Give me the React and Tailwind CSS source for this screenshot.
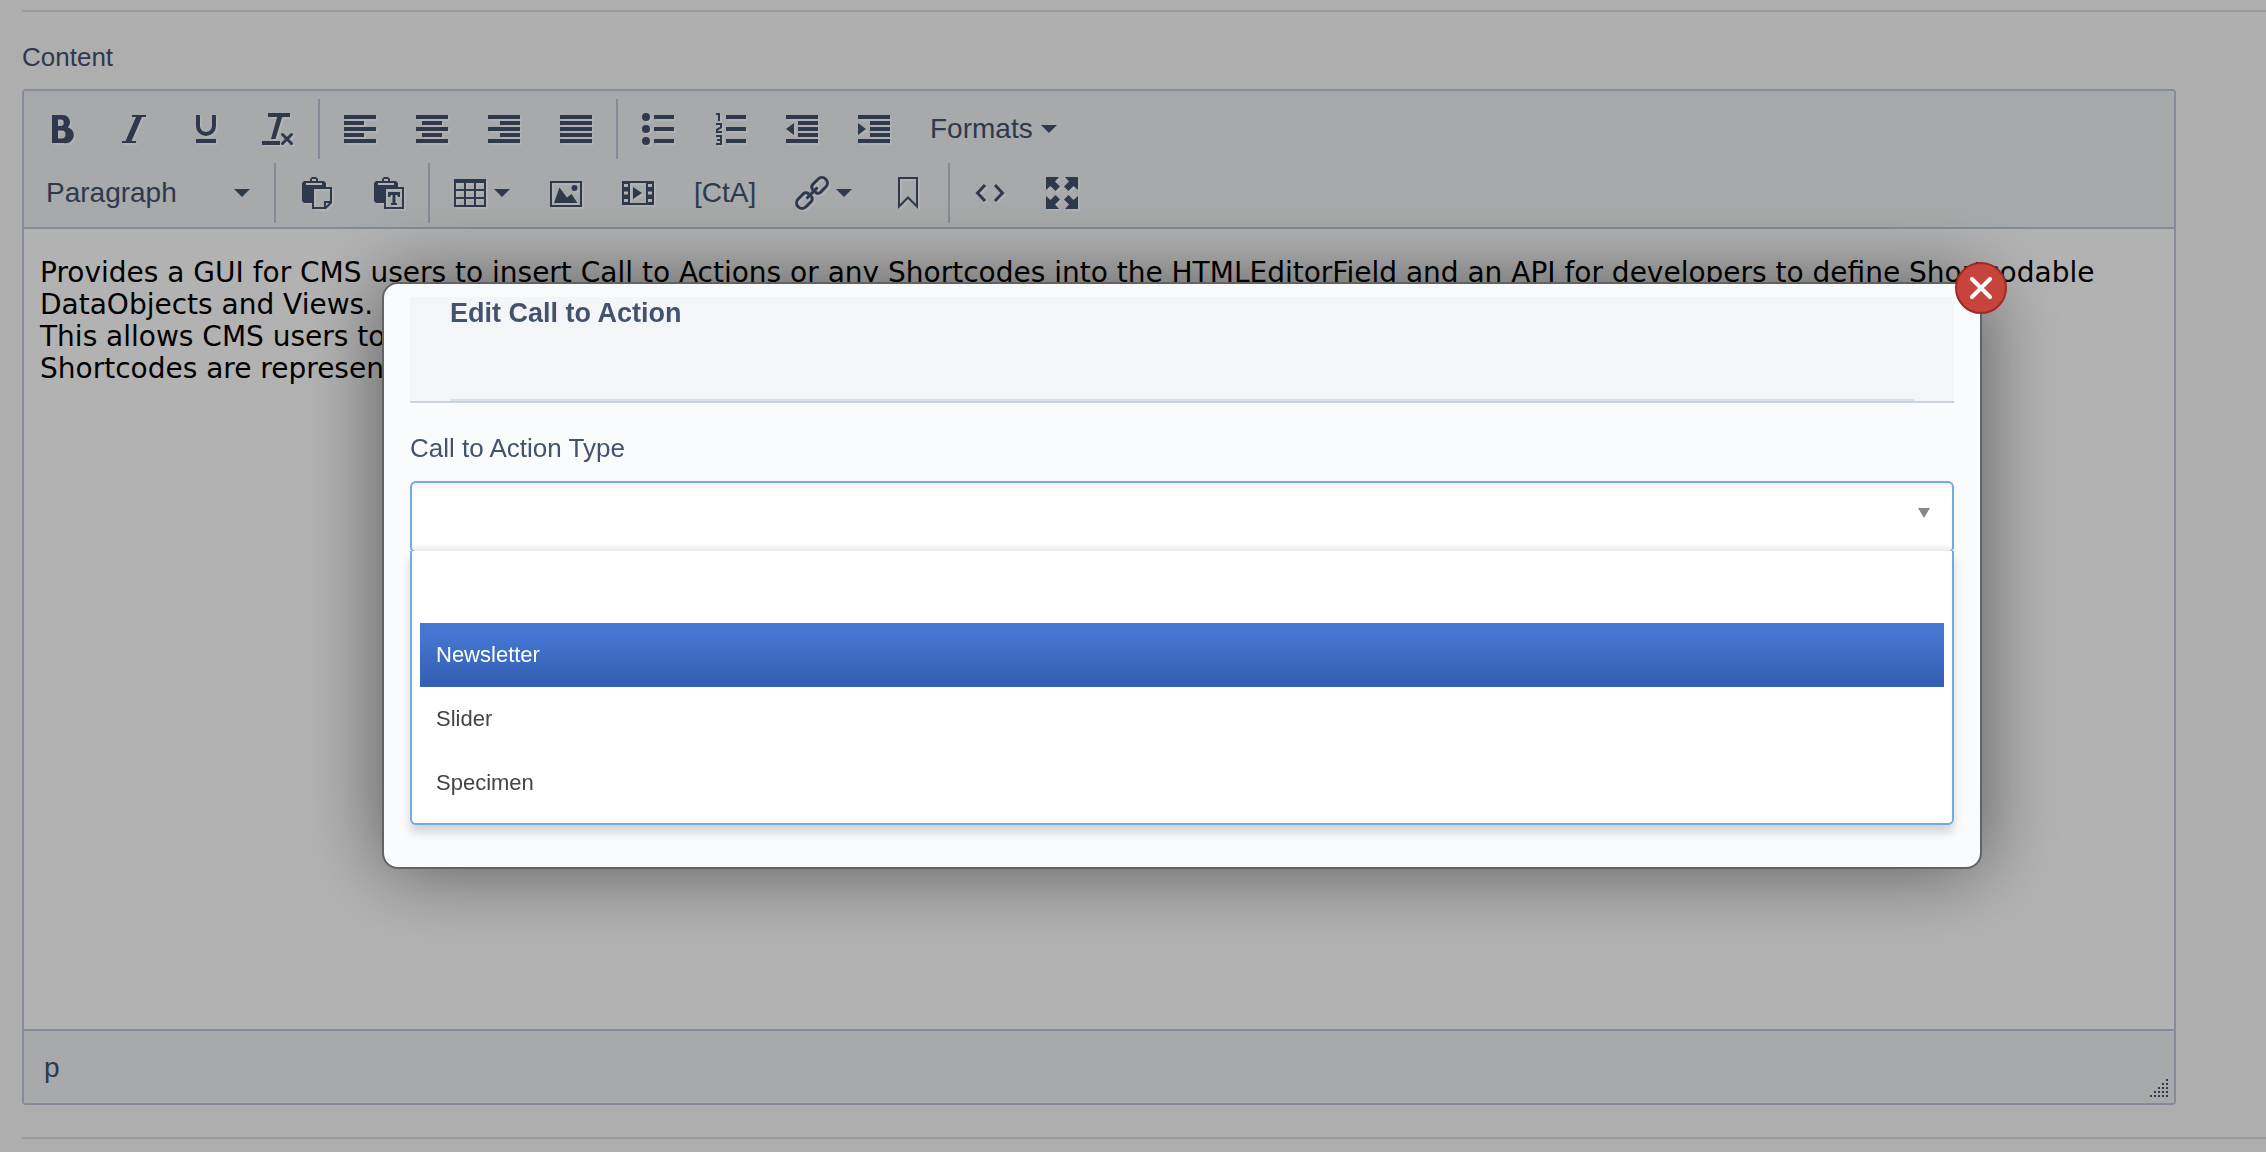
import React from "react";

function Icon({ children }) {
  return (
    <svg
      viewBox="0 0 32 32"
      aria-hidden="true"
      className="size-8 shrink-0 overflow-visible fill-current drop-shadow-[2px_2px_0_#ffffff]"
    >
      {children}
    </svg>
  );
}

function Caret() {
  return (
    <svg viewBox="0 0 16 8" aria-hidden="true" className="h-2 w-4 shrink-0 fill-current">
      <path d="M0 0h16L8 8z" />
    </svg>
  );
}

function ToolButton({ label, menu, children }) {
  return (
    <button
      type="button"
      aria-label={label}
      aria-haspopup={menu ? "menu" : undefined}
      className="flex h-[60px] items-center gap-2 px-5"
    >
      {children}
      {menu && <Caret />}
    </button>
  );
}

function Group({ first, children }) {
  return (
    <div className={first ? "flex h-[60px] pr-1" : "flex h-[60px] border-l-2 border-[#bfc8d9] px-1"}>
      {children}
    </div>
  );
}

const bars = (rows) => rows.map(([x, y, w]) => <rect key={y} x={x} y={y} width={w} height="4" />);

const icons = {
  bold: (
    <path
      fillRule="evenodd"
      d="M6 2h10.500a7.200 7.200 0 0 1 5.300 12.300A8 8 0 0 1 17.500 30H6zM12 6.500v6.500h2.500a3.250 3.250 0 0 0 0-6.500zM12 17.500v8h3.500a4 4 0 0 0 0-8z"
    />
  ),
  italic: <path d="M14 2h14v2h-4L13.500 28H18v2H4v-2h3.500L18 4h-4z" />,
  underline: (
    <>
      <path d="M8 2v11a8 8 0 0 0 16 0V2" fill="none" stroke="currentColor" strokeWidth="4" />
      <rect x="6" y="26" width="20" height="4" />
    </>
  ),
  clear: (
    <>
      <path d="M6 0h22v4H6zM15.500 3h5L13.500 26H9zM0 28h18v4H0z" />
      <path d="M20.500 21.500l9 9M29.500 21.500l-9 9" stroke="currentColor" strokeWidth="3" strokeLinecap="round" />
    </>
  ),
  left: bars([[0, 2, 32], [0, 8, 20], [0, 14, 32], [0, 20, 20], [0, 26, 32]]),
  center: bars([[0, 2, 32], [6, 8, 20], [0, 14, 32], [6, 20, 20], [0, 26, 32]]),
  right: bars([[0, 2, 32], [12, 8, 20], [0, 14, 32], [12, 20, 20], [0, 26, 32]]),
  justify: bars([[0, 2, 32], [0, 8, 32], [0, 14, 32], [0, 20, 32], [0, 26, 32]]),
  bullets: (
    <>
      {bars([[12, 2, 20], [12, 14, 20], [12, 26, 20]])}
      <circle cx="4" cy="4" r="4" />
      <circle cx="4" cy="16" r="4" />
      <circle cx="4" cy="28" r="4" />
    </>
  ),
  numbers: (
    <>
      {bars([[12, 2, 20], [12, 14, 20], [12, 26, 20]])}
      <path
        d="M2 1h3v7M2 11h5v3.500L3 16.500V19h5M2 23h5v8H2M3 27h4"
        fill="none"
        stroke="currentColor"
        strokeWidth="2"
      />
    </>
  ),
  outdent: (
    <>
      {bars([[0, 2, 32], [12, 8, 20], [12, 14, 20], [12, 20, 20], [0, 26, 32]])}
      <path d="M8 10v12l-8-6z" />
    </>
  ),
  indent: (
    <>
      {bars([[0, 2, 32], [12, 8, 20], [12, 14, 20], [12, 20, 20], [0, 26, 32]])}
      <path d="M0 10v12l8-6z" />
    </>
  ),
  paste: (
    <>
      <path fillRule="evenodd" d="M4 4h6V2l2-2h4l2 2v2h6l2 2v4H12v16H4l-2-2V6zM12 2v2h4V2zM6 6v2h16V6z" />
      <path fillRule="evenodd" d="M12 10h20v16l-6 6H12zM14 12v18h10v-6h6V12zM26 26v3l3-3z" />
    </>
  ),
  pasteText: (
    <>
      <path fillRule="evenodd" d="M4 4h6V2l2-2h4l2 2v2h6l2 2v4H12v16H4l-2-2V6zM12 2v2h4V2zM6 6v2h16V6z" />
      <path fillRule="evenodd" d="M12 10h20v22H12zM14 12v18h16V12z" />
      <path d="M16 15h12v5h-2l-1-2h-1.500v8H25v2h-6v-2h1.500v-8H19l-1 2h-2z" />
    </>
  ),
  table: (
    <path
      fillRule="evenodd"
      d="M0 2h32v28H0zM2 6v6h8V6zM12 6v6h8V6zM22 6v6h8V6zM2 14v6h8v-6zM12 14v6h8v-6zM22 14v6h8v-6zM2 22v6h8v-6zM12 22v6h8v-6zM22 22v6h8v-6z"
    />
  ),
  image: (
    <>
      <path fillRule="evenodd" d="M0 4h32v26H0zM2 6v22h28V6z" />
      <path d="M4 26l5.500-15.500L17 20.500l4.500-3.500L27.500 26z" />
      <circle cx="24.500" cy="11" r="3" />
    </>
  ),
  media: (
    <>
      <path
        fillRule="evenodd"
        d="M0 4h32v24H0zM8 6v20h16V6zM2 7v3h4V7zM2 14.500v3h4v-3zM2 22v3h4v-3zM26 7v3h4V7zM26 14.500v3h4v-3zM26 22v3h4v-3z"
      />
      <path d="M11 10l9 6-9 6z" />
    </>
  ),
  link: (
    <g transform="rotate(-45 16 16)" fill="none" stroke="currentColor" strokeWidth="3" strokeLinecap="round">
      <path d="M13 13.500a4 4 0 0 0-3.500-3H2a5.500 5.500 0 0 0 0 11h7.500a4 4 0 0 0 3.500-3" />
      <path d="M19 13.500a4 4 0 0 1 3.500-3H30a5.500 5.500 0 0 1 0 11h-7.500a4 4 0 0 1-3.500-3" />
      <path d="M9.500 16h13" />
    </g>
  ),
  anchor: <path d="M7 1h18v28.500l-9-9-9 9z" fill="none" stroke="currentColor" strokeWidth="2" />,
  code: <path d="M11 8l-7.500 8 7.500 8M21 8l7.500 8-7.500 8" fill="none" stroke="currentColor" strokeWidth="3" />,
  fullscreen: (
    <>
      <path d="M0 0h13L9 4.500l5 5L9.500 14l-5-5L0 13z" />
      <path d="M32 0H19l4 4.500-5 5 4.500 4.500 5-5L32 13z" />
      <path d="M0 32h13l-4-4.500 5-5L9.500 18l-5 5L0 19z" />
      <path d="M32 32H19l4-4.500-5-5 4.500-4.500 5 5 4.500-4z" />
    </>
  ),
};

function Tool({ name, label, menu }) {
  return (
    <ToolButton label={label} menu={menu}>
      <Icon>{icons[name]}</Icon>
    </ToolButton>
  );
}

function Toolbar() {
  return (
    <div role="toolbar" className="flex flex-col gap-1 border-b-2 border-[#bfc8d9] bg-[#f0f3f4] px-[2px] pt-2 pb-1 text-[28px]">
      <div className="flex">
        <Group first>
          <Tool name="bold" label="Bold" />
          <Tool name="italic" label="Italic" />
          <Tool name="underline" label="Underline" />
          <Tool name="clear" label="Clear formatting" />
        </Group>
        <Group>
          <Tool name="left" label="Align left" />
          <Tool name="center" label="Align center" />
          <Tool name="right" label="Align right" />
          <Tool name="justify" label="Justify" />
        </Group>
        <Group>
          <Tool name="bullets" label="Bullet list" />
          <Tool name="numbers" label="Numbered list" />
          <Tool name="outdent" label="Decrease indent" />
          <Tool name="indent" label="Increase indent" />
          <ToolButton label="Formats" menu>
            Formats
          </ToolButton>
        </Group>
      </div>
      <div className="flex">
        <Group first>
          <div className="relative flex w-[244px] items-center">
            <select aria-label="Block format" className="h-full w-full appearance-none bg-transparent pl-5">
              <option>Paragraph</option>
            </select>
            <span className="pointer-events-none absolute right-5">
              <Caret />
            </span>
          </div>
        </Group>
        <Group>
          <Tool name="paste" label="Paste" />
          <Tool name="pasteText" label="Paste as text" />
        </Group>
        <Group>
          <Tool name="table" label="Table" menu />
          <Tool name="image" label="Insert image" />
          <Tool name="media" label="Insert media" />
          <ToolButton label="Insert call to action">[CtA]</ToolButton>
          <Tool name="link" label="Insert link" menu />
          <Tool name="anchor" label="Anchor" />
        </Group>
        <Group>
          <Tool name="code" label="Source code" />
          <Tool name="fullscreen" label="Fullscreen" />
        </Group>
      </div>
    </div>
  );
}

function ResizeGrip() {
  const dots = [];
  for (let r = 0; r < 5; r++) {
    for (let c = 4 - r; c < 5; c++) {
      dots.push(<rect key={`${r}-${c}`} x={c * 4} y={r * 4} width="2" height="2" />);
    }
  }
  return (
    <svg viewBox="0 0 18 18" aria-hidden="true" className="size-[18px] fill-current">
      {dots}
    </svg>
  );
}

function Editor() {
  return (
    <div className="mr-[90px] overflow-hidden rounded-[4px] border-2 border-[#bfc8d9]">
      <Toolbar />
      <div
        role="textbox"
        aria-multiline="true"
        aria-labelledby="content-label"
        contentEditable
        suppressContentEditableWarning
        className="h-[800px] bg-white px-4 pt-7 font-['DejaVu_Sans',sans-serif] text-[28px] leading-8 text-black"
      >
        <p>
          Provides a GUI for CMS users to insert Call to Actions or any Shortcodes into the HTMLEditorField and an API
          for developers to define Shortcodable DataObjects and Views.
        </p>
        <p>This allows CMS users to embed and customise DataObjects.</p>
        <p>Shortcodes are represented in the HTMLEditorField.</p>
      </div>
      <div className="flex h-[74px] items-end justify-between border-t-2 border-[#bfc8d9] bg-[#f0f3f4] pr-[6px] pb-[6px] pl-5 text-[28px]">
        <span className="self-center pt-2">p</span>
        <ResizeGrip />
      </div>
    </div>
  );
}

function Option({ selected, children }) {
  return (
    <li
      role="option"
      aria-selected={!!selected}
      className={
        selected
          ? "h-16 bg-linear-to-b from-[#4576d1] from-20% to-[#3560b5] to-90% px-4 leading-[64px] text-white"
          : "h-16 px-4 leading-[64px] text-[#444444]"
      }
    >
      {children}
    </li>
  );
}

function Modal() {
  return (
    <div
      role="dialog"
      aria-labelledby="dialog-title"
      className="relative w-full max-w-[1600px] rounded-2xl border-2 border-[#636363] bg-[#fafbfd] px-[26px] pt-[13px] pb-[42px] text-[#43536d] shadow-[0_0_80px_rgba(0,0,0,0.5)]"
    >
      <button
        type="button"
        aria-label="Close"
        className="absolute -top-[22px] -right-[27px] flex size-[52px] items-center justify-center rounded-full border-2 border-[#9f2a26] bg-[#c8433c] text-white"
      >
        <svg viewBox="0 0 22 22" aria-hidden="true" className="size-[22px]">
          <path d="M2 2l18 18M20 2L2 20" stroke="currentColor" strokeWidth="4" strokeLinecap="round" />
        </svg>
      </button>
      <header className="border-b-2 border-[#ccd3e0] bg-[#f4f5f7] px-10">
        <h2 id="dialog-title" className="h-[104px] border-b-2 border-[#dae0e6] text-[27px] leading-8 font-bold">
          Edit Call to Action
        </h2>
      </header>
      <label htmlFor="cta-type" className="block pt-[30px] pb-[18px] text-[26px] leading-[30px]">
        Call to Action Type
      </label>
      <div className="relative">
        <select
          id="cta-type"
          className="block h-[72px] w-full appearance-none rounded-md border-2 border-[#72aae4] bg-[linear-gradient(to_bottom,#f0f0f0,#ffffff_8px,#ffffff_60px,#ececec)]"
        />
        <svg
          viewBox="0 0 12 10"
          aria-hidden="true"
          className="pointer-events-none absolute top-[27px] right-6 h-[10px] w-3 fill-[#888888]"
        >
          <path d="M0 0h12L6 10z" />
        </svg>
      </div>
      <ul
        role="listbox"
        aria-label="Call to Action Type"
        className="relative -mt-[2px] rounded-b-md border-x-2 border-b-2 border-[#72aae4] bg-white p-2 text-[22px] shadow-[0_8px_10px_rgba(0,0,0,0.15)]"
      >
        <Option />
        <Option selected>Newsletter</Option>
        <Option>Slider</Option>
        <Option>Specimen</Option>
      </ul>
    </div>
  );
}

export default function App() {
  return (
    <div className="min-h-screen bg-[#fafafa] font-['Liberation_Sans',Arial,sans-serif] text-[#43536d]">
      <main className="pt-[10px] pl-[22px]">
        <hr className="border-t-2 border-[#dedee3]" />
        <div id="content-label" className="pt-[30px] pb-[17px] text-[26px] leading-[30px]">
          Content
        </div>
        <Editor />
        <hr className="mt-8 border-t-2 border-[#dedee3]" />
      </main>
      <div className="fixed inset-0 flex items-start justify-center overflow-hidden bg-black/30 pt-[282px] pl-[98px]">
        <Modal />
      </div>
    </div>
  );
}
